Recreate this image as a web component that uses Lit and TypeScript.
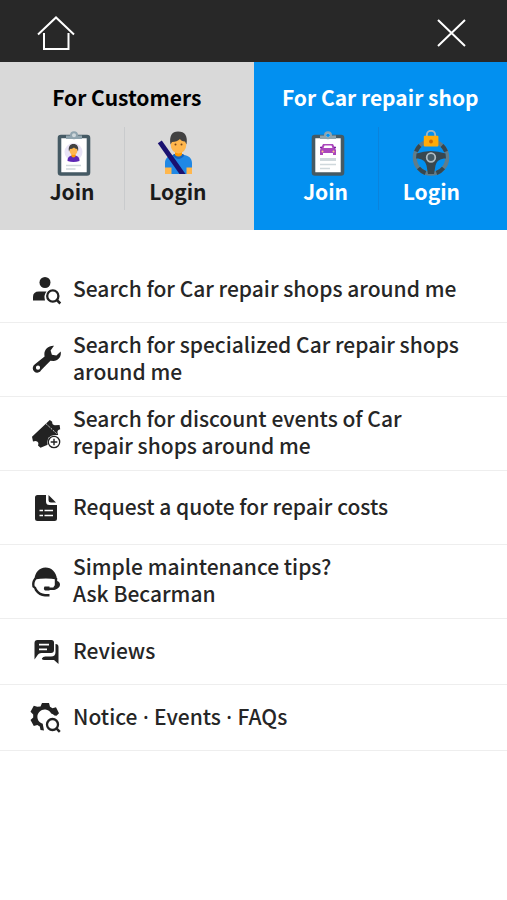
import { LitElement, html, css, svg, nothing } from "lit";
import { customElement } from "lit/decorators.js";

const clipboard = svg`
  <rect x="11.5" y="6.5" width="29" height="37.5" rx="1.5" fill="#fff" stroke="#455a64" stroke-width="3.6"/>
  <path d="M18 5.5h4.500a3.600 3.600 0 0 1 7 0H34V9H18z" fill="#90a4ae"/>
  <circle cx="26" cy="5.200" r="3" fill="#cfd8dc" stroke="#90a4ae" stroke-width="2"/>`;

const customerJoin = html`<svg class="art" viewBox="0 0 48 48" aria-hidden="true">
  ${clipboard}
  <circle cx="25.500" cy="22" r="9" fill="#e8e3f6"/>
  <path d="M19.500 31c0-4 2-5.500 6-5.500s6 1.500 6 5.500q-6 2-12 0z" fill="#5e28b5"/>
  <path d="M23.500 23h4v3.500q-2 2-4 0z" fill="#ff9800"/>
  <ellipse cx="25.500" cy="20.500" rx="3.900" ry="4.600" fill="#ffb74d"/>
  <path d="M21 21.500c-1-5 1-7.500 4.500-7.500s5.500 2.500 4.500 7.500l-1-2.500q-2-.5-3-1.500-2 1.500-4 1.500z" fill="#424242"/>
  <path d="M18 35.500h15M18 39h9.500" stroke="#cfd8dc" stroke-width="1.400"/>
</svg>`;

const customerLogin = html`<svg class="art" viewBox="0 0 48 48" aria-hidden="true">
  <path d="M11 37h27v7H11z" fill="#ffb74d"/>
  <path d="M11 37.500V33c0-5 3.500-7.500 8.500-8h10c5 .5 8.500 3 8.500 8v4.500h-5.500V44h-15v-6.500z" fill="#2088e5"/>
  <path d="M18.500 25.200q6 7.500 12 0l-1.500-1.200h-9z" fill="#1565c0"/>
  <path d="M21 20h7v5q-3.500 3-7 0z" fill="#ff9800"/>
  <ellipse cx="24.500" cy="15" rx="7.800" ry="8.500" fill="#ffb74d"/>
  <path d="M16.500 14.500C15 6 18 1.500 24 1.500c7 0 10 4.500 8.500 13L31 11.500q-4-.5-5-2.500-3 3-8 3z" fill="#424242"/>
  <circle cx="21.500" cy="14.500" r="1" fill="#784719"/><circle cx="27.500" cy="14.500" r="1" fill="#784719"/>
  <path d="M3.800 13.200 7.800 10.500 31.500 44h-6z" fill="#1a1170"/>
</svg>`;

const shopJoin = html`<svg class="art" viewBox="0 0 48 48" aria-hidden="true">
  ${clipboard}
  <circle cx="26" cy="5.200" r="1.800" fill="#0290f0"/>
  <path d="M21 14h10l2.500 5 .5 1v5h-3v-2H21v2h-3v-5l.5-1zM22.500 15.500l-1 2.500h9l-1-2.500z" fill="#ab47bc" fill-rule="evenodd"/>
  <circle cx="20.500" cy="21.500" r="1" fill="#ffcc80"/><circle cx="31.500" cy="21.500" r="1" fill="#ffcc80"/>
  <path d="M18 17.500h2M32 17.500h2" stroke="#7b1fa2" stroke-width="1.500"/>
  <path d="M18 29.500h16" stroke="#cfd8dc" stroke-width="3"/>
  <path d="M18 34.500h16M18 38.500h10" stroke="#cfd8dc" stroke-width="1.500"/>
</svg>`;

const shopLogin = html`<svg class="art" viewBox="0 0 48 48" aria-hidden="true">
  <circle cx="24" cy="27.500" r="16.300" fill="none" stroke="#607d8b" stroke-width="4"/>
  <path d="M35 15.500a16.300 16.300 0 0 1 4 6M9 21.500a16.300 16.300 0 0 1 4-6M11.500 38a16.300 16.300 0 0 0 7 5M29.500 43a16.300 16.300 0 0 0 7-5" fill="none" stroke="#37474f" stroke-width="4"/>
  <path d="M9.500 23.500q14.500-5 29 0l.5 5c-6 0-9 2-10.500 7L27 44h-6l-1.500-8.500c-1.500-5-4.500-7-10.500-7z" fill="#37474f"/>
  <circle cx="24" cy="27.500" r="4.300" fill="#455a64" stroke="#b0bec5" stroke-width="1.700"/>
  <path d="M19.800 8V5a4.200 4.200 0 0 1 8.400 0v3" fill="none" stroke="#9fb6c2" stroke-width="1.900"/>
  <rect x="16.800" y="5.800" width="14.600" height="10.800" rx="1" fill="#ffab0a"/>
  <circle cx="24" cy="11.500" r="1.900" fill="#d06a00"/>
</svg>`;

const icons = {
  person: svg`
    <circle cx="15" cy="8.500" r="5.500"/>
    <path d="M3 26.500V23q0-5.500 6-5.500h7.500q-3 3.500-1.500 9z"/>
    <circle cx="22.800" cy="22" r="5.600" fill="none" stroke="currentColor" stroke-width="2.300"/>
    <path d="m26.800 26 3.500 3.500" stroke="currentColor" stroke-width="2.500"/>`,
  wrench: svg`
    <path fill-rule="evenodd" d="M24 1.800 20.600 6.500l1.300 4.300 4.500.7 4.300-3.900c.9 5-2.200 9.200-7.200 9.300l-3.100-.1L11.300 26.100A4.500 4.500 0 1 1 4.900 20.300L14.600 12.500C13.300 6.500 17.500 1.500 24 1.800zM8 21.600a2.100 2.100 0 1 0 0 4.200 2.100 2.100 0 0 0 0-4.200z"/>`,
  ticket: svg`
    <path d="M2 18.800 19.800 2l2.400 1.800q-.3 3 2.500 3.500l4.900-.3.600 4.200q-3.200.6-2.700 3.500l.7 2.300q-8.500-.8-10.500 9.800L10.500 29.800 8 27.500q1.500-4-2.500-4.500L3 23.500z"/>
    <path d="m16 5.700 10.500 9.800" fill="none" stroke="#fff" stroke-width=".8" stroke-dasharray="2 1.200"/>
    <circle cx="24" cy="24" r="6.800" fill="#fff"/>
    <circle cx="24" cy="24" r="5.700" fill="none" stroke="currentColor" stroke-width="1.300"/>
    <path d="M20.700 24h6.600M24 20.700v6.600" stroke="currentColor" stroke-width="1.400"/>`,
  quote: svg`
    <path d="M7.500 3H16v6.500q0 3.500 3.500 3.500H27v13.500q0 2.500-2.500 2.500h-17Q5 29 5 26.500v-21Q5 3 7.500 3z"/>
    <path d="M18.500 3v5q0 2.500 2.500 2.500h5z"/>
    <path d="M9.500 18.500H13M14.500 18.500H23M9.500 23.500H13M14.500 23.500H23" stroke="#fff" stroke-width="1.700"/>`,
  headset: svg`
    <path d="M4.500 14C4.500 6.500 9.500 1.500 15.500 1.500S26.500 6 27 13.500q-11-2-22.500 0z"/>
    <path d="M5.500 12.500Q2.500 16 3.500 20.500q2 1 2.500 3.500 3.500 5 9 5.200h4.500M26 12v7.500l-2 3.200h-8.500" fill="none" stroke="currentColor" stroke-width="2.400"/>
    <path d="M25 14.500q5 .5 5 4T25 23.700zM14.500 20.500h5v4h-4.500q-2-1.500-.5-4z"/>`,
  chat: svg`
    <path fill-rule="evenodd" d="M7.500 4h14Q24 4 24 6.500V14q0 3-3 3h-9.500q-3 0-4.500 3l-2.500 3.500V7q0-3 3-3zM9 7.800v1.700h10V7.800zM9 12.500v1.700h8v-1.700z"/>
    <path d="M25.500 8q3 0 3 3v17l-4.500-4h-9.500q-2.500 0-2.700-1.500 1.200-2 3.500-2H21q4.500 0 4.500-4.500z"/>`,
  gear: svg`
    <path d="M12 1h7l1 3.700 2.500 1.500 3.500-1 3 6-2.500 2.500-2-.3a9 9 0 0 0-3.300-1.900 7.300 7.300 0 1 0-8.500 10.300l1.300 6.700-3.500-.5-.7-3.500-2.500-1.500-3.500 1-3.300-6 2.700-2.500v-3L.5 9.800l3.300-6 3.500 1L10.500 4.500z"/>
    <circle cx="22.500" cy="22.500" r="5.500" fill="none" stroke="currentColor" stroke-width="2.300"/>
    <path d="m26.400 26.400 3.400 3.400" stroke="currentColor" stroke-width="2.500"/>`,
};

const dot = html`<span class="dot"> · </span>`;

const menu = [
  { icon: icons.person, lines: ["Search for Car repair shops around me"], size: "" },
  { icon: icons.wrench, lines: ["Search for specialized Car repair shops", "around me"], size: "tall" },
  { icon: icons.ticket, lines: ["Search for discount events of Car", "repair shops around me"], size: "tall" },
  { icon: icons.quote, lines: ["Request a quote for repair costs"], size: "tall" },
  { icon: icons.headset, lines: ["Simple maintenance tips?", "Ask Becarman"], size: "tall" },
  { icon: icons.chat, lines: ["Reviews"], size: "" },
  { icon: icons.gear, lines: [html`Notice${dot}Events${dot}FAQs`], size: "" },
];

@customElement("app-root")
export class AppRoot extends LitElement {
  static styles = css`
    :host {
      display: block;
      min-height: 100vh;
      background: #fff;
      color: #262626;
      font-family: "Noto Sans CJK KR", "Noto Sans", sans-serif;
      font-size: 21px;
      font-weight: 500;
      line-height: 27px;
    }
    * { box-sizing: border-box; }
    a { color: inherit; text-decoration: none; }
    svg { display: block; }
    .bar {
      display: flex;
      align-items: center;
      justify-content: space-between;
      height: 62px;
      padding: 4px 36px 0;
      background: #282828;
    }
    .tool {
      padding: 0;
      border: 0;
      background: none;
      color: #fff;
      cursor: pointer;
    }
    .tool svg { width: 40px; height: 40px; }
    .panels { display: grid; grid-template-columns: 1fr 1fr; }
    .panel { padding: 22px 0 20px; background: #d9d9d9; color: #1a1a1a; }
    .shop { background: #0290f0; color: #fff; }
    .title {
      margin: 0;
      color: #000;
      font-size: 21px;
      font-weight: 700;
      text-align: center;
      white-space: nowrap;
    }
    .shop .title { color: #fff; }
    .actions {
      display: grid;
      grid-template-columns: 1fr 1fr;
      margin-top: 16px;
      padding: 0 23px 0 20px;
    }
    .action {
      display: flex;
      flex-direction: column;
      align-items: center;
      height: 83px;
      padding-top: 3px;
      font-weight: 700;
    }
    .action:first-child { border-right: 1px solid #c9cbcd; }
    .shop .action:first-child { border-right-color: #0a83dc; }
    .art { width: 48px; height: 48px; }
    .menu { margin: 0; padding: 27px 0 0; list-style: none; }
    .row { border-bottom: 1px solid #eee; }
    .link {
      display: flex;
      align-items: center;
      gap: 11px;
      min-height: 65px;
      padding: 0 20px 0 30px;
    }
    .tall { min-height: 73px; }
    .glyph { flex: none; width: 32px; height: 32px; fill: currentColor; color: #222; }
    .text { padding-bottom: 3px; }
    .dot { font-family: "Noto Sans", sans-serif; line-height: 1; white-space: pre; }
  `;

  private action(label: string, art: unknown) {
    return html`<a class="action" href="#${label.toLowerCase()}">${art}<span>${label}</span></a>`;
  }

  render() {
    return html`
      <header class="bar">
        <button class="tool" aria-label="Home">
          <svg viewBox="0 0 40 40" fill="none" stroke="currentColor" stroke-width="2">
            <path d="M2 21.500 20 4.500l18 17M8 20v16h24.500V20"/>
          </svg>
        </button>
        <button class="tool" aria-label="Close">
          <svg viewBox="0 0 40 40" fill="none" stroke="currentColor" stroke-width="2">
            <path d="m7 7 27 26M34 7 7 33"/>
          </svg>
        </button>
      </header>
      <div class="panels">
        <section class="panel">
          <h2 class="title">For Customers</h2>
          <div class="actions">
            ${this.action("Join", customerJoin)}${this.action("Login", customerLogin)}
          </div>
        </section>
        <section class="panel shop">
          <h2 class="title">For Car repair shop</h2>
          <div class="actions">
            ${this.action("Join", shopJoin)}${this.action("Login", shopLogin)}
          </div>
        </section>
      </div>
      <nav>
        <ul class="menu">
          ${menu.map(
            (m) => html`<li class="row">
              <a class="link ${m.size}" href="#menu">
                <svg class="glyph" viewBox="0 0 32 32" aria-hidden="true">${m.icon}</svg>
                <span class="text">${m.lines.map((l, i) => html`${i ? html`<br>` : nothing}${l}`)}</span>
              </a>
            </li>`
          )}
        </ul>
      </nav>
    `;
  }
}
